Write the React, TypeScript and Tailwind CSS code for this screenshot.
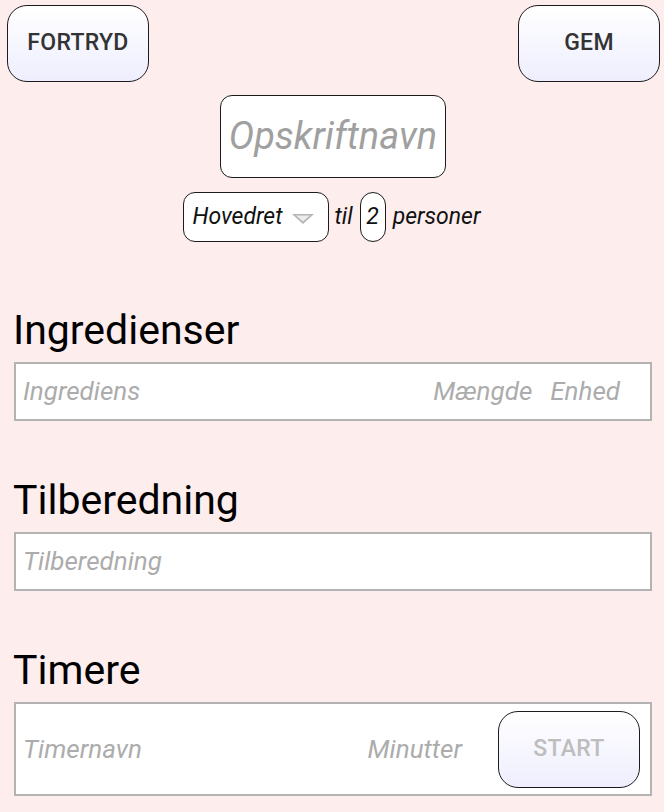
import React from 'react';

type PillButtonProps = {
  /** Button label. */
  label: string;
  /** Dim the label, as for a disabled action. */
  muted?: boolean;
};

/**
 * Large rounded button with a pale gradient.
 */
function PillButton({ label, muted }: PillButtonProps) {
  return (
    <button
      className={
        'flex h-[77px] w-[142px] shrink-0 items-center justify-center rounded-[20px] border-[1.5px] border-[#1c1c1c] bg-gradient-to-b from-white to-[#eeeefe] text-[23px] font-medium tracking-[0.3px] ' +
        (muted ? 'text-[#bdbdbd]' : 'text-[#333333]')
      }
    >
      {label}
    </button>
  );
}

/**
 * Small down-pointing triangle used by the dish-type spinner.
 */
function SpinnerArrow() {
  return (
    <svg width="26" height="14" viewBox="0 0 26 14" className="mt-[4px]">
      <defs>
        <filter id="soft" x="-20%" y="-20%" width="140%" height="140%">
          <feGaussianBlur stdDeviation="0.7" />
        </filter>
      </defs>
      <g filter="url(#soft)">
        <polygon points="2,2 24,2 13,12" fill="#b5b5b5" />
        <polygon points="6,3.5 20,3.5 13,9.5" fill="#ececec" />
      </g>
    </svg>
  );
}

type SectionProps = {
  title: string;
  children: React.ReactNode;
  boxHeight: string;
  top: string;
};

/**
 * A heading followed by a white bordered input area.
 */
function Section({ title, children, boxHeight, top }: SectionProps) {
  return (
    <section className={top}>
      <h2 className="pl-[13px] text-[41px] leading-[46px] text-black">{title}</h2>
      <div
        className={
          'mt-[9px] ml-[14px] mr-[12px] flex items-center border-2 border-[#b3b3b3] bg-white pl-[7px] text-[26px] italic text-[#acacac] ' +
          boxHeight
        }
      >
        {children}
      </div>
    </section>
  );
}

export default function App() {
  return (
    <div
      className="min-h-[812px] w-full bg-[#fdeded] pb-4"
      style={{ fontFamily: 'Roboto, "Noto Sans", sans-serif' }}
    >
      <div className="flex justify-between pl-[7px] pr-[4px] pt-[5px]">
        <PillButton label="FORTRYD" />
        <PillButton label="GEM" />
      </div>

      <div className="mt-[13px] flex justify-center pl-[2px]">
        <div className="flex h-[83px] w-[226px] items-center justify-center rounded-[12px] border-[1.5px] border-[#1c1c1c] bg-white text-[38px] italic text-[#a0a0a0]">
          Opskriftnavn
        </div>
      </div>

      <div className="mt-[14px] flex items-center justify-center text-[23px] italic text-[#111]">
        <div className="flex h-[50px] w-[146px] items-center gap-[7px] rounded-[12px] border-[1.5px] border-[#1c1c1c] bg-white pl-[8px]">
          <span>Hovedret</span>
          <SpinnerArrow />
        </div>
        <span className="ml-[5px]">til</span>
        <div className="ml-[7px] flex h-[50px] w-[26px] items-center justify-center rounded-full border-[1.5px] border-[#1c1c1c] bg-white">
          <span>2</span>
        </div>
        <span className="ml-[7px]">personer</span>
      </div>

      <Section title="Ingredienser" boxHeight="h-[59px]" top="mt-[65px]">
        <span className="flex-1">Ingrediens</span>
        <span>Mængde</span>
        <span className="ml-[18px] mr-[30px]">Enhed</span>
      </Section>

      <Section title="Tilberedning" boxHeight="h-[59px]" top="mt-[56px]">
        <span>Tilberedning</span>
      </Section>

      <Section title="Timere" boxHeight="h-[94px]" top="mt-[56px]">
        <span className="flex-1">Timernavn</span>
        <span className="mr-[36px]">Minutter</span>
        <div className="mr-[10px] not-italic">
          <PillButton label="START" muted />
        </div>
      </Section>
    </div>
  );
}
